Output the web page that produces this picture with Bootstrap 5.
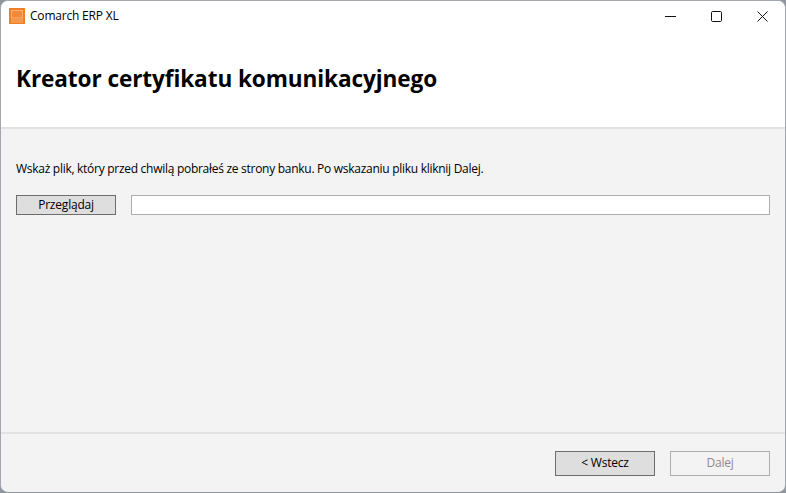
<!DOCTYPE html>
<html lang="pl"><head><meta charset="utf-8"><title>Comarch ERP XL</title>
<link href="https://cdn.jsdelivr.net/npm/bootstrap@5.3.0/dist/css/bootstrap.min.css" rel="stylesheet">
<style>
html,body{height:100%;margin:0;background:#8f959c}
body{font-family:"Open Sans","Noto Sans",sans-serif;font-size:12px;color:#000;overflow:hidden}
.win{height:493px;width:786px;border:1px solid #a3a8ae;border-bottom-color:#8f959c;border-radius:8px;overflow:hidden;background:#f3f3f3}
.tbar{height:30px;background:#fff;padding-left:8px;letter-spacing:-.2px}
.ticon{gap:5px}
.ctrls{height:30px}
.ctrl{width:46px;height:30px;display:flex;align-items:center;justify-content:center}
.hdr{height:98px;background:#fff;border-bottom:2px solid #e2e2e2;padding:0 15px}
.hdr h1{font-size:22.6px;font-weight:700;margin:0;letter-spacing:-.1px;line-height:1;font-family:"Open Sans",sans-serif;padding-top:1px}
.body{padding:32px 15px 0 15px}
.msg{line-height:16px;height:16px;letter-spacing:-.28px;margin-bottom:18px}
.wbtn{width:100px;height:20px;padding:0;font-size:12px;line-height:16px;border:1px solid #6d6d6d;background:#dedede;color:#000;border-radius:0;letter-spacing:-.2px;font-family:inherit}
.wbtn.btn:disabled{background:#f3f3f3;border:1px solid #adadad;color:#8c8c8c;opacity:1}
.wbtn-tall{height:25px}
.pathbox{height:20px;background:#fff;border:1px solid #adadad;margin-left:15px}
.foot{height:60px;border-top:2px solid #e2e2e2;padding:0 15px 0 0;gap:15px}
.main{height:304px}
</style></head><body>
<div class="win d-flex flex-column">
<div class="tbar d-flex align-items-center justify-content-between">
<div class="ticon d-flex align-items-center">
<svg width="16" height="16" viewBox="0 0 16 16"><rect width="16" height="16" fill="#ef7f25"/><rect x="2.5" y="2.5" width="11" height="7.5" fill="#f0893a" stroke="#f6b27c" stroke-width="1"/><path d="M2 12h12M2 14h12" stroke="#f6b27c" stroke-width="1"/></svg>
<span>Comarch ERP XL</span></div>
<div class="ctrls d-flex">
<div class="ctrl"><svg width="11" height="11" viewBox="0 0 11 11"><path d="M0 5.5h11" stroke="#111" stroke-width="1"/></svg></div>
<div class="ctrl"><svg width="11" height="11" viewBox="0 0 11 11"><rect x=".5" y=".5" width="10" height="10" rx="1.2" fill="none" stroke="#111"/></svg></div>
<div class="ctrl"><svg width="11" height="11" viewBox="0 0 11 11"><path d="M.5.5l10 10M10.5.5l-10 10" stroke="#111" stroke-width="1"/></svg></div>
</div></div>
<div class="hdr d-flex align-items-center"><h1>Kreator certyfikatu komunikacyjnego</h1></div>
<div class="body main">
<p class="msg">Wskaż plik, który przed chwilą pobrałeś ze strony banku. Po wskazaniu pliku kliknij Dalej.</p>
<div class="d-flex"><button type="button" class="btn wbtn">Przeglądaj</button><div class="pathbox flex-grow-1"></div></div>
</div>
<div class="foot d-flex align-items-center justify-content-end">
<button type="button" class="btn wbtn wbtn-tall">&lt; Wstecz</button>
<button type="button" class="btn wbtn wbtn-tall" disabled>Dalej</button>
</div>
</div>
</body></html>
